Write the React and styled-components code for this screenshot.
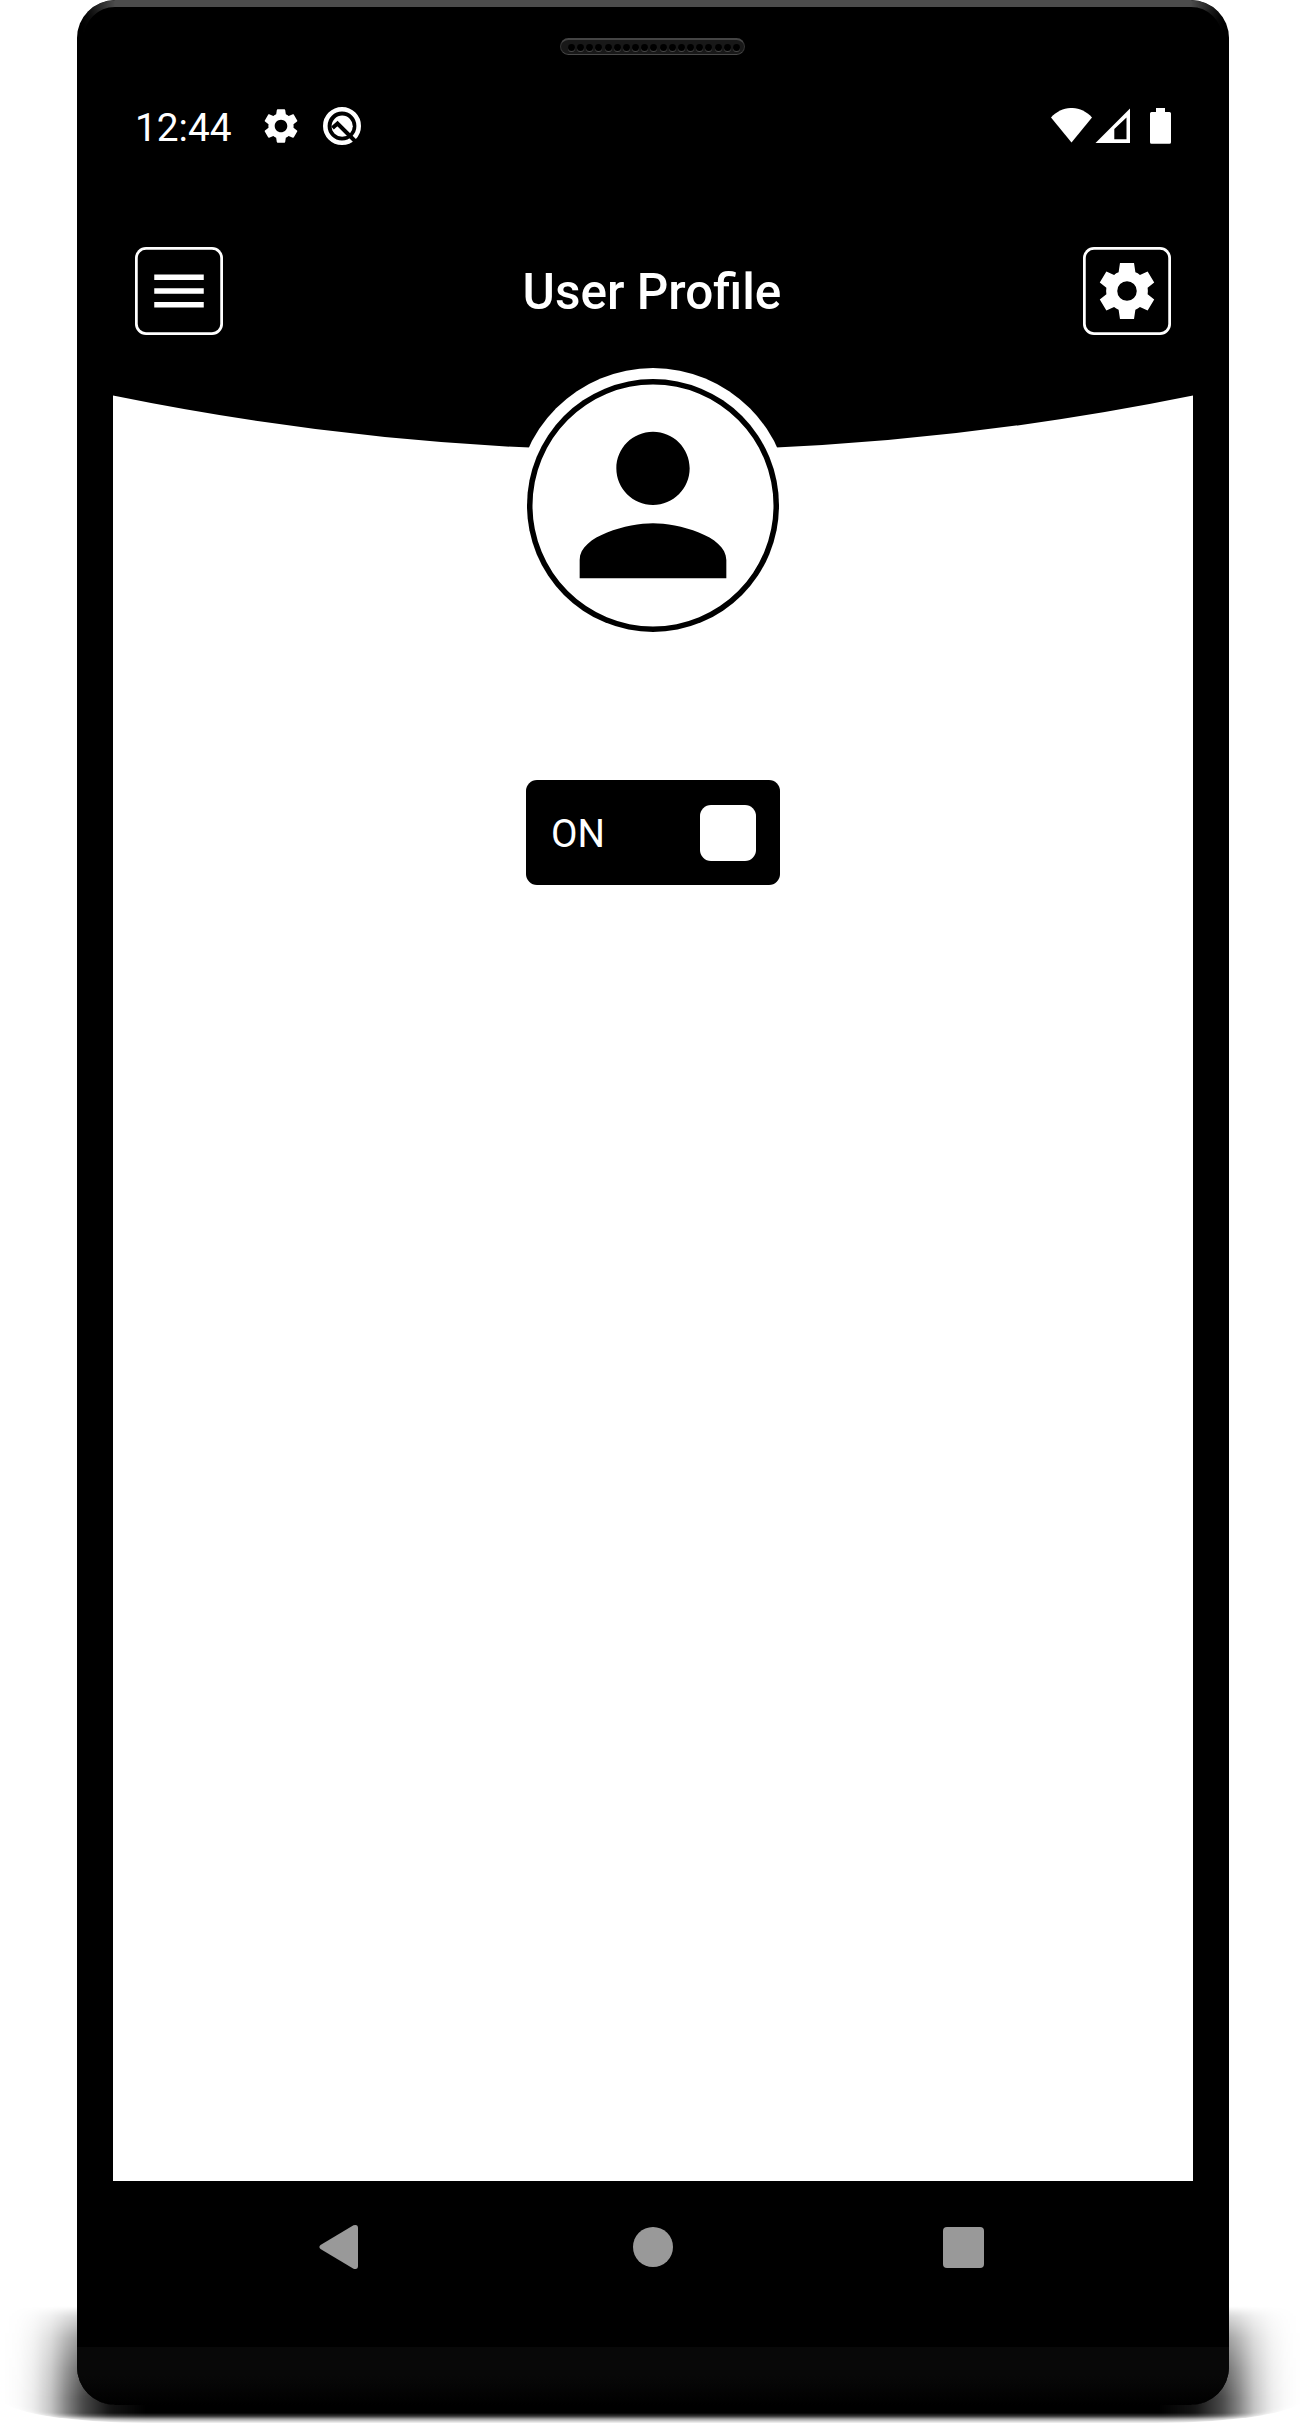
import React from "react";
import styled, { createGlobalStyle } from "styled-components";

const GlobalStyle = createGlobalStyle`
  * { box-sizing: border-box; }
  body {
    margin: 0;
    background: #fff;
    font-family: Roboto, "Liberation Sans", sans-serif;
  }
`;

const Stage = styled.main`
  position: relative;
  display: flex;
  justify-content: center;
  height: 2430px;
  background: #fff;
  overflow: hidden;
`;

const GroundShadow = styled.div`
  position: absolute;
  left: 0;
  right: 0;
  top: 2306px;
  height: 117px;
  border-radius: 0 0 150px 150px / 0 0 26px 26px;
  filter: blur(2.5px);
  background: linear-gradient(
    90deg,
    rgba(0, 0, 0, 0) 4px,
    rgba(0, 0, 0, 0.02) 20px,
    rgba(0, 0, 0, 0.08) 34px,
    rgba(0, 0, 0, 0.23) 51px,
    rgba(0, 0, 0, 0.49) 67px,
    rgba(0, 0, 0, 0.71) 83px,
    rgba(0, 0, 0, 0.92) 110px,
    #000 145px,
    #000 calc(100% - 145px),
    rgba(0, 0, 0, 0.92) calc(100% - 110px),
    rgba(0, 0, 0, 0.71) calc(100% - 83px),
    rgba(0, 0, 0, 0.49) calc(100% - 67px),
    rgba(0, 0, 0, 0.23) calc(100% - 51px),
    rgba(0, 0, 0, 0.08) calc(100% - 34px),
    rgba(0, 0, 0, 0.02) calc(100% - 20px),
    rgba(0, 0, 0, 0) calc(100% - 4px)
  );
  mask-image: linear-gradient(
    180deg,
    transparent 0,
    rgba(0, 0, 0, 0.25) 10px,
    rgba(0, 0, 0, 0.58) 32px,
    rgba(0, 0, 0, 0.84) 62px,
    #000 92px,
    #000 107px,
    rgba(0, 0, 0, 0.8) 110px,
    rgba(0, 0, 0, 0.38) 113px,
    rgba(0, 0, 0, 0.1) 117px
  );
`;

const Phone = styled.div`
  position: relative;
  display: flex;
  flex-direction: column;
  align-items: center;
  width: 1152px;
  height: 2405px;
  margin-left: 1px;
  border-radius: 38px;
  background: #000;
  overflow: hidden;

  &::before {
    content: "";
    position: absolute;
    inset: 0;
    border: 7px solid #4c4c4c;
    border-radius: 38px;
    pointer-events: none;
    mask-image: linear-gradient(180deg, #000 7px, transparent 36px),
      linear-gradient(90deg, transparent 5px, #000 38px, #000 calc(100% - 38px), transparent calc(100% - 5px));
    mask-composite: intersect;
  }
`;

const TopBezel = styled.div`
  display: flex;
  justify-content: center;
  align-items: flex-start;
  height: 93px;
  padding-top: 38px;
`;

const Speaker = styled.div`
  display: flex;
  justify-content: space-between;
  align-items: center;
  width: 185px;
  height: 17px;
  margin-right: 1px;
  padding: 1px 4px 0 7px;
  border-radius: 9px;
  background: #181818;
  border: 1px solid #333;
  border-top: 2px solid #444;
  border-bottom-color: #484848;
`;

const SpeakerHole = styled.i`
  width: 7px;
  height: 7px;
  border-radius: 50%;
  background: #000;
  box-shadow: 0 1px 0 #484848;
`;

const Screen = styled.div`
  display: flex;
  flex-direction: column;
  width: 1080px;
  height: 2220px;
  background: #fff;
`;

const StatusBar = styled.div`
  display: flex;
  align-items: center;
  height: 66px;
  padding: 0 22px;
  background: #000;
  color: #fff;
`;

const Clock = styled.time`
  width: 97px;
  padding-top: 3px;
  font-size: 38.8px;
  line-height: 66px;
`;

const Notifications = styled.div`
  display: flex;
  align-items: center;
  gap: 21px;
  margin-left: 28px;
`;

const SystemIcons = styled.div`
  display: flex;
  align-items: center;
  margin-left: auto;
`;

const Header = styled.header`
  display: flex;
  align-items: center;
  justify-content: space-between;
  height: 236px;
  padding: 88px 22px 60px;
  background: #000;
  color: #fff;
`;

const IconButton = styled.button`
  display: flex;
  align-items: center;
  justify-content: center;
  width: 88px;
  height: 88px;
  padding: 0;
  border: 0;
  border-radius: 11px;
  background: #000;
  box-shadow: inset 0 0 0 2.75px #fff;
  color: #fff;
`;

const Title = styled.h1`
  margin: 0;
  padding: 2px 2px 0 0;
  font-size: 49.5px;
  line-height: 60px;
  font-weight: 500;
`;

const Curve = styled.svg`
  display: block;
  flex: none;
`;

const Profile = styled.section`
  display: flex;
  flex-direction: column;
  align-items: center;
  flex: 1;
  margin-top: -82px;
`;

const AvatarHalo = styled.div`
  position: relative;
  width: 274px;
  height: 275px;
  padding: 11px;
  border-radius: 50%;
  background: #fff;
`;

const Avatar = styled.div`
  display: flex;
  align-items: center;
  justify-content: center;
  height: 253px;
  border-radius: 50%;
  box-shadow: inset 0 0 0 5.5px #000;
`;

const PersonIcon = styled.svg`
  display: block;
  flex: none;
  margin-bottom: 1px;
`;

const Toggle = styled.button`
  display: flex;
  align-items: center;
  justify-content: space-between;
  width: 254px;
  height: 105px;
  margin-top: 137px;
  padding: 0 24px 0 25px;
  border: 0;
  border-radius: 11px;
  background: #000;
  color: #fff;
  font: 400 38.5px/45px Roboto, "Liberation Sans", sans-serif;
`;

const ToggleLabel = styled.span`
  padding-top: 2px;
`;

const Knob = styled.span`
  width: 56px;
  height: 56px;
  border-radius: 11px;
  background: #fff;
`;

const NavBar = styled.nav`
  display: grid;
  grid-template-columns: 451px 178px 451px;
  height: 132px;
  align-items: center;
  justify-items: center;
  background: #000;
  color: #999;
`;

const NavSlot = styled.div`
  display: flex;
  justify-self: ${(p) => p.$side || "center"};
  padding: ${(p) => p.$pad || "0"};
`;

const BottomBezel = styled.div`
  width: 100%;
  height: 58px;
  margin-top: 34px;
  background: linear-gradient(180deg, #080808 50%, #000);
`;

const COG =
  "M19.14 12.94c.04-.3.06-.61.06-.94 0-.32-.02-.64-.07-.94l2.03-1.58c.18-.14.23-.41.12-.61l-1.92-3.32c-.12-.22-.37-.29-.59-.22l-2.39.96c-.5-.38-1.03-.7-1.62-.94l-.36-2.54c-.04-.24-.24-.41-.48-.41h-3.84c-.24 0-.43.17-.47.41l-.36 2.54c-.59.24-1.13.57-1.62.94l-2.39-.96c-.22-.08-.47 0-.59.22L2.74 8.87c-.12.21-.08.47.12.61l2.03 1.58c-.05.3-.09.63-.09.94s.02.64.07.94l-2.03 1.58c-.18.14-.23.41-.12.61l1.92 3.32c.12.22.37.29.59.22l2.39-.96c.5.38 1.03.7 1.62.94l.36 2.54c.05.24.24.41.48.41h3.84c.24 0 .44-.17.47-.41l.36-2.54c.59-.24 1.13-.56 1.62-.94l2.39.96c.22.08.47 0 .59-.22l1.92-3.32c.12-.22.07-.47-.12-.61l-2.01-1.58zM12 15.6c-1.98 0-3.6-1.62-3.6-3.6s1.62-3.6 3.6-3.6 3.6 1.62 3.6 3.6-1.62 3.6-3.6 3.6z";

const SHARP_COG =
  "M9.45 1.85h5.1l.5 3.35c.6.2 1.15.55 1.65.95l2.8-1.25 2.4 4.05-2.4 1.9c.12.75.12 1.55 0 2.3l2.4 1.9-2.4 4.05-2.8-1.25c-.5.4-1.05.75-1.65.95l-.5 3.35h-5.1l-.5-3.35c-.6-.2-1.15-.55-1.65-.95l-2.8 1.25-2.4-4.05 2.4-1.9c-.12-.75-.12-1.55 0-2.3l-2.4-1.9 2.4-4.05 2.8 1.25c.5-.4 1.05-.75 1.65-.95zM12 15.55a3.55 3.55 0 1 0 0-7.1 3.55 3.55 0 0 0 0 7.1z";

const holes = Array.from({ length: 19 }, (_, i) => i);

export default function App() {
  return (
    <>
      <GlobalStyle />
      <Stage>
        <GroundShadow />
        <Phone>
          <TopBezel>
            <Speaker>
              {holes.map((i) => (
                <SpeakerHole key={i} />
              ))}
            </Speaker>
          </TopBezel>
          <Screen>
            <StatusBar>
              <Clock>12:44</Clock>
              <Notifications>
                <svg width="42" height="42" viewBox="0 0 24 24" fill="currentColor">
                  <path d={COG} />
                </svg>
                <svg width="38" height="38" viewBox="0 0 38 38">
                  <circle cx="19" cy="19" r="16.7" fill="none" stroke="#fff" strokeWidth="4.6" />
                  <circle cx="19.2" cy="19.2" r="10.6" fill="#fff" />
                  <path d="M9.5 21L14.5 16.6L33 35" fill="none" stroke="#000" strokeWidth="4" />
                </svg>
              </Notifications>
              <SystemIcons>
                <svg width="120" height="36" viewBox="0 0 120 36" fill="#fff">
                  <path d="M0 9.5C11.5-3.2 29.5-3.2 41 9.5L20.5 34.5z" />
                  <path fillRule="evenodd" d="M44.5 35L79 .5V35zM63.3 31.3h12.2V9.5L63.3 21z" />
                  <path d="M105 0h9v4h4.5q1.5 0 1.5 1.5v28.8q0 1.5-1.5 1.5h-18q-1.5 0-1.5-1.5V5.5q0-1.5 1.5-1.5h4.5z" />
                </svg>
              </SystemIcons>
            </StatusBar>
            <Header>
              <IconButton aria-label="Menu">
                <svg width="66" height="66" viewBox="0 0 24 24" fill="currentColor">
                  <path d="M3 18h18v-2H3v2zm0-5h18v-2H3v2zm0-7v2h18V6H3z" />
                </svg>
              </IconButton>
              <Title>User Profile</Title>
              <IconButton aria-label="Settings">
                <svg width="66" height="66" viewBox="0 0 24 24" fill="currentColor">
                  <path fillRule="evenodd" d={SHARP_COG} />
                </svg>
              </IconButton>
            </Header>
            <Curve width="1080" height="55" viewBox="0 0 1080 55">
              <path d="M0 0V.5Q540 110.5 1080 .5V0z" />
            </Curve>
            <Profile>
              <AvatarHalo>
                <Avatar>
                  <PersonIcon width="220" height="220" viewBox="0 0 24 24">
                    <path d="M12 12c2.21 0 4-1.79 4-4s-1.79-4-4-4-4 1.79-4 4 1.79 4 4 4zm0 2c-2.67 0-8 1.34-8 4v2h16v-2c0-2.66-5.33-4-8-4z" />
                  </PersonIcon>
                </Avatar>
              </AvatarHalo>
              <Toggle role="switch" aria-checked="true">
                <ToggleLabel>ON</ToggleLabel>
                <Knob />
              </Toggle>
            </Profile>
            <NavBar>
              <NavSlot $side="start" $pad="0 0 0 206px">
                <svg width="39" height="46" viewBox="0 0 39 46" fill="currentColor">
                  <path d="M1.5 21L34.5 1.3Q39 0 39 4V42Q39 46 34.5 44.7L1.5 25Q-.7 23 1.5 21z" />
                </svg>
              </NavSlot>
              <NavSlot>
                <svg width="40" height="40" viewBox="0 0 40 40" fill="currentColor">
                  <circle cx="20" cy="20" r="20" />
                </svg>
              </NavSlot>
              <NavSlot $side="end" $pad="0 209px 0 0">
                <svg width="41" height="41" viewBox="0 0 41 41" fill="currentColor">
                  <rect width="41" height="41" rx="4" />
                </svg>
              </NavSlot>
            </NavBar>
          </Screen>
          <BottomBezel />
        </Phone>
      </Stage>
    </>
  );
}
